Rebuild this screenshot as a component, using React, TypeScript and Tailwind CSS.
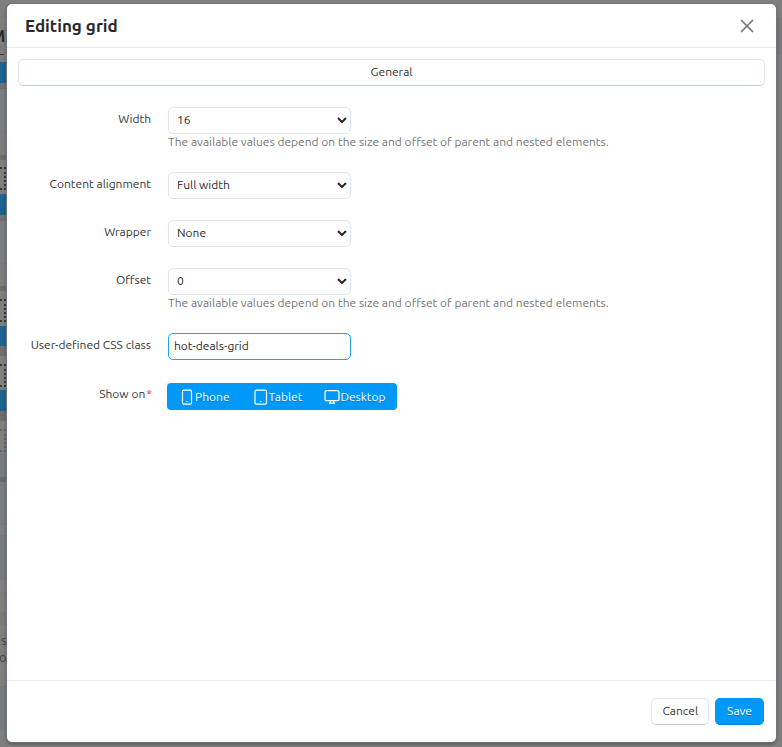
import { useState, type ReactNode } from 'react';

const BACKDROP_ROWS = [
  'h-[17px] bg-[#7f7f7f] border-b border-[#777a80]',
  'h-[45px] bg-[#7e7e7e]',
  'h-[21px] bg-[#1b6390]',
  'h-[6px] bg-[#727272]',
  'h-[43px] bg-[#7b7d80] border-b border-[#737982]',
  'h-[23px] bg-[#7d7d7d]',
  'h-[5px] bg-[#6d6d6d]',
  'h-[34px] bg-[#7f7f7f]',
  'h-[21px] bg-[#1b6390]',
  'h-[6px] bg-[#727272]',
  'h-[43px] bg-[#7b7d80] border-b border-[#737982]',
  'h-[22px] bg-[#7d7d7d]',
  'h-[5px] bg-[#6d6d6d]',
  'h-[35px] bg-[#7f7f7f]',
  'h-[20px] bg-[#1b6390]',
  'h-[10px] bg-[#6f6f6f]',
  'h-[34px] bg-[#7f7f7f]',
  'h-[21px] bg-[#1b6390]',
  'h-[10px] bg-[#6f6f6f]',
  'h-[34px] bg-[#7f7f7f] border-b border-[#737982]',
  'h-[22px] bg-[#787b80]',
  'h-[5px] bg-[#6d6d6d]',
  'h-[43px] bg-[#7b7d80] border-b border-[#737982]',
  'h-[11px] bg-[#7f7f7f] border-b border-[#737982]',
  'h-[44px] bg-[#787b80]',
  'h-[14px] bg-[#7f7f7f] border-b border-[#777a80]',
  'h-[18px] bg-[#7f7f7f]',
  'h-[13px] bg-[#7a7a7a]',
  'h-[62px] bg-[#7f7f7f] border-b border-[#737982]',
  'h-[43px] bg-[#787b80]',
];

const HINT = 'The available values depend on the size and offset of parent and nested elements.';

const DEVICES = [
  { id: 'phone', label: 'Phone', button: 'gap-[2px] pl-[14px] pr-3', icon: <PhoneIcon /> },
  { id: 'tablet', label: 'Tablet', button: 'gap-px pl-3 pr-[11px]', icon: <TabletIcon /> },
  { id: 'desktop', label: 'Desktop', button: 'px-[11px]', icon: <DesktopIcon /> },
];

function PhoneIcon() {
  return (
    <svg width="12" height="16" viewBox="0 0 12 16" fill="none" stroke="currentColor" strokeWidth="1.2" aria-hidden="true">
      <rect x="1.5" y="1.2" width="9" height="14" rx="1.5" />
      <path d="M5.4 12.5h1.2" />
    </svg>
  );
}

function TabletIcon() {
  return (
    <svg width="14" height="16" viewBox="0 0 14 16" fill="none" stroke="currentColor" strokeWidth="1.2" aria-hidden="true">
      <rect x="1" y="1.2" width="11.5" height="14" rx="1.5" />
      <path d="M6.2 12.5h1.2" />
    </svg>
  );
}

function DesktopIcon() {
  return (
    <svg width="16" height="16" viewBox="0 0 16 16" fill="none" stroke="currentColor" strokeWidth="1.3" aria-hidden="true">
      <rect x="1" y="1.7" width="14" height="10" rx="1.5" />
      <path d="M6.4 11.7v2.3M9.6 11.7v2.3" />
      <path d="M5 14.3h6" strokeWidth="1.5" />
    </svg>
  );
}

function Backdrop() {
  return (
    <div className="absolute inset-0 overflow-hidden bg-[#7f7f7f]" aria-hidden="true">
      <div className="flex">
        <div className="w-2">
          {BACKDROP_ROWS.map((row, i) => (
            <div key={i} className={row} />
          ))}
        </div>
        <div className="flex-1">
          <div className="h-[18px] border-b border-[#777a80]" />
          <div className="h-9 bg-[#7a7a7a]" />
        </div>
      </div>
      {/* dotted outlines of the grid blocks */}
      <div className="absolute left-0 top-[167px] h-[23px] w-[6px] border-y-2 border-r-2 border-dotted border-[#383838]" />
      <div className="absolute left-0 top-[299px] h-[23px] w-[6px] border-y-2 border-r-2 border-dotted border-[#383838]" />
      <div className="absolute left-0 top-[364px] h-[23px] w-[6px] border-y-2 border-r-2 border-dotted border-[#383838]" />
      <div className="absolute left-0 top-[429px] h-[23px] w-[6px] border-y-2 border-r-2 border-dotted border-[#666666]" />
      <span className="absolute -left-[9px] top-[26px] text-base leading-5 font-bold text-[#292929]">M</span>
      <div className="absolute left-0 top-[54px] h-px w-1 bg-[#333333]" />
      <span className="absolute left-px top-[632px] text-[13px] leading-4 text-[#444444]">s</span>
      <span className="absolute -left-px top-[649px] text-[13px] leading-4 text-[#444444]">oc</span>
    </div>
  );
}

function Field({ label, htmlFor, hint, children }: { label: string; htmlFor: string; hint?: string; children: ReactNode }) {
  return (
    <div className="flex items-start">
      <label htmlFor={htmlFor} className="w-[133px] shrink-0 pt-1 text-right leading-4">
        {label}
      </label>
      <div className="ml-[17px] min-w-0 flex-1">
        {children}
        {hint && <p className="pb-[2px] text-[#767676] leading-[15px]">{hint}</p>}
      </div>
    </div>
  );
}

function Select({ id, options }: { id: string; options: string[] }) {
  return (
    <select
      id={id}
      className="block h-[27px] w-[183px] rounded-[5px] border border-[#dfe6f1] bg-white pl-1 pb-[2px] text-[#292929] outline-none"
    >
      {options.map((option) => (
        <option key={option}>{option}</option>
      ))}
    </select>
  );
}

export default function App() {
  const [cssClass, setCssClass] = useState('hot-deals-grid');
  const [shown, setShown] = useState(['phone', 'tablet', 'desktop']);

  const toggleDevice = (id: string) => {
    setShown((prev) => (prev.includes(id) ? prev.filter((d) => d !== id) : [...prev, id]));
  };

  return (
    <div className="relative flex min-h-screen font-['Ubuntu','Open_Sans',sans-serif] text-[12px] text-[#333333]">
      <Backdrop />
      <div
        role="dialog"
        aria-labelledby="dialog-title"
        className="relative mt-1 mr-[6px] mb-[5px] ml-[7px] flex min-w-0 flex-1 flex-col rounded-[5px] bg-white shadow-[0_0_0_1px_#6f7680,0_2px_4px_rgba(0,0,0,0.4)]"
      >
        <header className="flex h-11 items-center justify-between border-b border-[#e6eaf1] pt-px pl-[18px] pr-[22px]">
          <h1 id="dialog-title" className="text-[17px] leading-6 font-bold text-[#292929]">
            Editing grid
          </h1>
          <button type="button" aria-label="Close" className="text-[#777777]">
            <svg width="14" height="14" viewBox="0 0 14 14" fill="none" stroke="currentColor" strokeWidth="1.7" aria-hidden="true">
              <path d="M1 1l12 12M13 1L1 13" />
            </svg>
          </button>
        </header>

        <form id="grid-form" className="flex-1 px-[11px] pt-[11px]" onSubmit={(e) => e.preventDefault()}>
          <button
            type="button"
            className="block h-[27px] w-full rounded-[5px] border border-[#dfe6f1] border-b-[#c0cee2] bg-white pb-[2px]"
          >
            General
          </button>

          <div className="mt-[21px] flex flex-col gap-[21px]">
            <Field label="Width" htmlFor="width" hint={HINT}>
              <Select id="width" options={['16', '12', '8', '4']} />
            </Field>
            <Field label="Content alignment" htmlFor="alignment">
              <Select id="alignment" options={['Full width', 'Left', 'Right']} />
            </Field>
            <Field label="Wrapper" htmlFor="wrapper">
              <Select id="wrapper" options={['None']} />
            </Field>
            <Field label="Offset" htmlFor="offset" hint={HINT}>
              <Select id="offset" options={['0', '1', '2']} />
            </Field>
            <Field label="User-defined CSS class" htmlFor="css-class">
              <input
                id="css-class"
                type="text"
                value={cssClass}
                onChange={(e) => setCssClass(e.target.value)}
                className="block h-[27px] w-[183px] rounded-[5px] border border-[#22a4f5] bg-white px-[5px] pb-[2px] text-[#292929] outline-none"
              />
            </Field>

            <div className="flex items-start" role="group" aria-labelledby="show-on">
              <span id="show-on" className="w-[134px] shrink-0 pt-[5px] text-right leading-4">
                Show on<span className="ml-px text-[#ee1155]">*</span>
              </span>
              <div className="mt-[2px] ml-[15px] flex h-[27px] overflow-hidden rounded-[4px] bg-[#0099f7] text-white">
                {DEVICES.map(({ id, label, button, icon }) => (
                  <button
                    key={id}
                    type="button"
                    aria-pressed={shown.includes(id)}
                    onClick={() => toggleDevice(id)}
                    className={`flex items-center text-shadow-[0_1px_1px_rgba(0,0,0,0.2)] ${button} ${shown.includes(id) ? '' : 'opacity-60'}`}
                  >
                    {icon}
                    {label}
                  </button>
                ))}
              </div>
            </div>
          </div>
        </form>

        <footer className="flex h-[62px] items-center justify-end gap-[6px] border-t border-[#e8ebf0] pr-3">
          <button
            type="button"
            className="h-[27px] rounded-[5px] border border-[#dfe6f1] border-b-[#c0cee2] bg-white px-[10px] pb-[2px]"
          >
            Cancel
          </button>
          <button
            type="submit"
            form="grid-form"
            className="h-[27px] rounded-[5px] border border-[#0099f7] border-b-[#0080e0] bg-[#0099f7] px-[11px] pb-[2px] text-white text-shadow-[0_1px_1px_rgba(0,0,0,0.2)]"
          >
            Save
          </button>
        </footer>
      </div>
    </div>
  );
}
